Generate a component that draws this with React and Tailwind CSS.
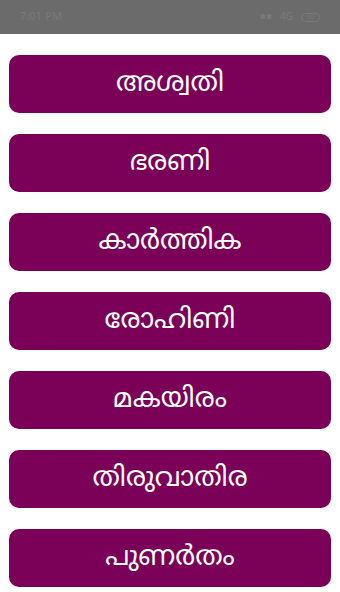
import React from 'react';

const stars = ['അശ്വതി', 'ഭരണി', 'കാർത്തിക', 'രോഹിണി', 'മകയിരം', 'തിരുവാതിര', 'പുണർതം'];

const StatusBar = () => (
  <div className="flex h-[34px] items-center justify-between bg-[#6b6b6b] px-5 text-[11px] text-[#7a7a7a]">
    <span>7:01 PM</span>
    <div className="flex items-center gap-2">
      <span className="text-[9px]">▪▪</span>
      <span className="text-[10px]">4G</span>
      <div className="flex h-[9px] w-[19px] items-center justify-center rounded-full border border-[#7a7a7a] text-[6px]">
        50
      </div>
    </div>
  </div>
);

export default function App() {
  return (
    <div className="h-[592px] overflow-hidden bg-white" style={{ fontFamily: '"Noto Sans Malayalam", "Noto Sans", "DejaVu Sans", sans-serif' }}>
      <StatusBar />
      <div className="flex flex-col gap-[21px] px-[9px] pt-[21px]">
        {stars.map((s) => (
          <button
            key={s}
            className="flex h-[58px] w-full items-center justify-center rounded-[10px] bg-[#7a0058] pt-[3px] text-[27px] text-white"
          >
            {s}
          </button>
        ))}
      </div>
    </div>
  );
}
